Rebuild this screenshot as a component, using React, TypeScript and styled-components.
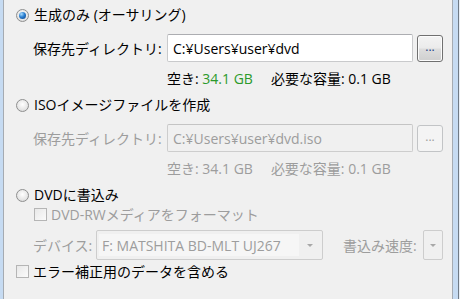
import styled, { createGlobalStyle } from 'styled-components'

const Global = createGlobalStyle`
  html, body { margin: 0; padding: 0; background: #f0f0f0; }
  body {
    font-family: "Open Sans", "Noto Sans CJK JP", sans-serif;
    font-size: 14px;
    color: #000;
  }
`

const Frame = styled.div`
  width: 460px;
  height: 299px;
  display: flex;
  overflow: hidden;
  background: #f0f0f0;
`

const Strip = styled.div<{ $w: number; $c: string }>`
  flex: 0 0 ${p => p.$w}px;
  background: ${p => p.$c};
`

const Panel = styled.div`
  flex: 1;
  display: flex;
  flex-direction: column;
  padding-left: 12px;
`

const OptionRow = styled.label<{ $h: number; $mt?: number }>`
  display: flex;
  align-items: center;
  gap: 5px;
  height: ${p => p.$h}px;
  margin-top: ${p => p.$mt ?? 0}px;
  line-height: 1;
`

const Radio = styled.span<{ $on?: boolean }>`
  flex: 0 0 13px;
  width: 13px;
  height: 13px;
  box-sizing: border-box;
  border-radius: 50%;
  border: 1px solid #8e8f8f;
  background: radial-gradient(circle at 50% 40%, #ffffff 0%, #e6e6e6 60%, #cfcfcf 100%);
  display: flex;
  align-items: center;
  justify-content: center;
  &::after {
    content: '';
    display: ${p => (p.$on ? 'block' : 'none')};
    width: 7px;
    height: 7px;
    border-radius: 50%;
    background: radial-gradient(circle at 35% 30%, #a9dcff 0%, #2a7fd0 45%, #0a3e86 100%);
  }
`

const Check = styled.span`
  flex: 0 0 13px;
  width: 13px;
  height: 13px;
  box-sizing: border-box;
  border: 1px solid #b5b5b5;
  background: linear-gradient(135deg, #e8e8e8 0%, #fbfbfb 100%);
`

const Text = styled.span<{ $dim?: boolean }>`
  color: ${p => (p.$dim ? '#9d9d9d' : '#000')};
  white-space: nowrap;
`

const FieldRow = styled.div<{ $mt: number }>`
  display: flex;
  align-items: center;
  margin-top: ${p => p.$mt}px;
  padding-left: 17px;
  height: 28px;
`

const FieldLabel = styled.span<{ $dim?: boolean; $w: number }>`
  width: ${p => p.$w}px;
  flex: 0 0 ${p => p.$w}px;
  color: ${p => (p.$dim ? '#9d9d9d' : '#000')};
  white-space: nowrap;
`

const PathBox = styled.div<{ $dim?: boolean }>`
  width: 246px;
  height: 28px;
  box-sizing: border-box;
  border: 1px solid ${p => (p.$dim ? '#cdcdcd' : '#c9cacc')};
  border-top-color: ${p => (p.$dim ? '#c4c4c4' : '#acadb1')};
  border-radius: 2px;
  background: ${p => (p.$dim ? '#f0f0f0' : '#fff')};
  color: ${p => (p.$dim ? '#9d9d9d' : '#000')};
  padding-left: 5px;
  display: flex;
  align-items: center;
  white-space: nowrap;
`

const BrowseButton = styled.div<{ $dim?: boolean }>`
  margin-left: 4px;
  width: 26px;
  height: 27px;
  box-sizing: border-box;
  border: 1px solid ${p => (p.$dim ? '#c2c4c6' : '#707070')};
  border-radius: 3px;
  background: ${p =>
    p.$dim
      ? '#f4f4f4'
      : 'linear-gradient(#f3f3f3 0%, #ebebeb 48%, #dddddd 52%, #cfcfcf 100%)'};
  box-shadow: ${p => (p.$dim ? 'none' : 'inset 0 0 0 1px #fcfcfc')};
  color: ${p => (p.$dim ? '#9d9d9d' : '#1c3f86')};
  font-size: 12px;
  line-height: 1;
  display: flex;
  align-items: center;
  justify-content: center;
  padding-bottom: 3px;
`

const InfoRow = styled.div<{ $mt: number; $dim?: boolean }>`
  display: flex;
  gap: 18px;
  height: 20px;
  align-items: center;
  margin-top: ${p => p.$mt}px;
  padding-left: 151px;
  color: ${p => (p.$dim ? '#9d9d9d' : '#000')};
  white-space: nowrap;
`

const Green = styled.span`
  color: #2b9a2b;
`

const CheckRow = styled.label<{ $indent: number; $h: number; $mt?: number }>`
  display: flex;
  align-items: center;
  gap: 4px;
  height: ${p => p.$h}px;
  margin-top: ${p => p.$mt ?? 0}px;
  padding-left: ${p => p.$indent}px;
`

const DeviceRow = styled.div`
  display: flex;
  align-items: center;
  margin-top: 8px;
  height: 30px;
  padding-left: 17px;
`

const Combo = styled.div<{ $w: number }>`
  flex: 0 0 ${p => p.$w}px;
  width: ${p => p.$w}px;
  height: 30px;
  box-sizing: border-box;
  border: 1px solid #cdcdcd;
  border-radius: 2px;
  background: #f0f0f0;
  display: flex;
  align-items: center;
  padding: 2px;
`

const ComboValue = styled.div`
  flex: 0 0 200px;
  height: 22px;
  background: #f6f6f6;
  color: #9d9d9d;
  display: flex;
  align-items: center;
  padding-left: 3px;
  white-space: nowrap;
  box-sizing: border-box;
`

const Arrow = styled.div`
  flex: 1;
  display: flex;
  justify-content: center;
  align-items: center;
  &::after {
    content: '';
    border-left: 3px solid transparent;
    border-right: 3px solid transparent;
    border-top: 3px solid #a8a8a8;
  }
`

const SpeedLabel = styled.span`
  margin-left: 20px;
  margin-right: 6px;
  color: #9d9d9d;
  white-space: nowrap;
`

export default function App() {
  return (
    <>
      <Global />
      <Frame>
        <Strip $w={3} $c="#c6dbf2" />
        <Strip $w={1} $c="#a5abb2" />
        <Panel>
          <OptionRow $h={30}>
            <Radio $on />
            <Text>生成のみ (オーサリング)</Text>
          </OptionRow>
          <FieldRow $mt={4}>
            <FieldLabel $w={134}>保存先ディレクトリ:</FieldLabel>
            <PathBox>C:¥Users¥user¥dvd</PathBox>
            <BrowseButton>...</BrowseButton>
          </FieldRow>
          <InfoRow $mt={6}>
            <span>
              空き: <Green>34.1 GB</Green>
            </span>
            <span>必要な容量: 0.1 GB</span>
          </InfoRow>

          <OptionRow $h={22} $mt={6}>
            <Radio />
            <Text>ISOイメージファイルを作成</Text>
          </OptionRow>
          <FieldRow $mt={8}>
            <FieldLabel $w={134} $dim>保存先ディレクトリ:</FieldLabel>
            <PathBox $dim>C:¥Users¥user¥dvd.iso</PathBox>
            <BrowseButton $dim>...</BrowseButton>
          </FieldRow>
          <InfoRow $mt={6} $dim>
            <span>空き: 34.1 GB</span>
            <span>必要な容量: 0.1 GB</span>
          </InfoRow>

          <OptionRow $h={22} $mt={6}>
            <Radio />
            <Text>DVDに書込み</Text>
          </OptionRow>
          <CheckRow $indent={18} $h={16}>
            <Check />
            <Text $dim>DVD-RWメディアをフォーマット</Text>
          </CheckRow>
          <DeviceRow>
            <FieldLabel $w={63} $dim>デバイス:</FieldLabel>
            <Combo $w={227}>
              <ComboValue>F: MATSHITA BD-MLT UJ267</ComboValue>
              <Arrow />
            </Combo>
            <SpeedLabel>書込み速度:</SpeedLabel>
            <Combo $w={20}>
              <Arrow />
            </Combo>
          </DeviceRow>
          <CheckRow $indent={-1} $h={18} $mt={2}>
            <Check />
            <Text>エラー補正用のデータを含める</Text>
          </CheckRow>
        </Panel>
        <Strip $w={1} $c="#a5abb2" />
        <Strip $w={5} $c="#c6dbf2" />
        <Strip $w={1} $c="#6f7a86" />
        <Strip $w={1} $c="#e8eef5" />
      </Frame>
    </>
  )
}
